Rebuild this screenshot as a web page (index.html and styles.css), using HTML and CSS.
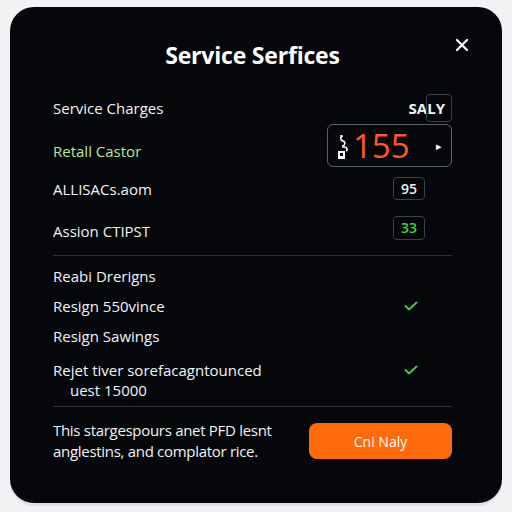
FILE: index.html
```html
<!DOCTYPE html>
<html lang="en">
<head>
    <meta charset="UTF-8">
    <title>Service Serfices</title>
    <link rel="stylesheet" href="styles.css">
</head>
<body>
    <div class="card">
        <div class="header">
            <span></span>
            <h1>Service Serfices</h1>
            <button class="close" aria-label="Close">
                <svg width="14" height="14" viewBox="0 0 14 14"><path d="M2 2L12 12M12 2L2 12" stroke="#fff" stroke-width="2.2" stroke-linecap="round"/></svg>
            </button>
        </div>

        <div class="rows">
            <div class="row r1">
                <span>Service Charges</span>
                <span class="tag">SALY</span>
            </div>
            <div class="row r2">
                <span class="label green">Retall Castor</span>
                <div class="bigbox">
                    <svg class="glyph" width="13" height="26" viewBox="0 0 13 26">
                        <path d="M7 2C4 2 4 6 7 7C10 8 9 12 6 12" stroke="#fff" stroke-width="1.6" fill="none"/>
                        <path d="M5 1V4M7 11V14" stroke="#fff" stroke-width="1.4"/>
                        <path d="M8 13C11 13 12 16 10 17" stroke="#fff" stroke-width="1.6" fill="none"/>
                        <rect x="2" y="17" width="7" height="8" fill="#fff"/>
                        <rect x="4" y="19" width="3" height="3" fill="#05070b"/>
                    </svg>
                    <span class="big">155</span>
                    <span class="tri">&#9656;</span>
                </div>
            </div>
            <div class="row r3">
                <span>ALLISACs.aom</span>
                <span class="num">95</span>
            </div>
            <div class="row r4">
                <span class="label">Assion CTIPST</span>
                <span class="num green2">33</span>
            </div>
        </div>

        <div class="checks">
            <div class="crow"><span>Reabi Drerigns</span></div>
            <div class="crow">
                <span>Resign 550vince</span>
                <svg class="ok" width="14" height="10" viewBox="0 0 14 10"><path d="M1.5 5L5 8.5L12.5 1.5" stroke="#3fd23f" stroke-width="1.8" fill="none" stroke-linecap="round" stroke-linejoin="round"/></svg>
            </div>
            <div class="crow"><span>Resign Sawings</span></div>
            <div class="crow last">
                <span>Rejet tiver sorefacagntounced<br><span class="indent">uest 15000</span></span>
                <svg class="ok" width="14" height="10" viewBox="0 0 14 10"><path d="M1.5 5L5 8.5L12.5 1.5" stroke="#3fd23f" stroke-width="1.8" fill="none" stroke-linecap="round" stroke-linejoin="round"/></svg>
            </div>
        </div>

        <div class="footer">
            <p>This stargespours anet PFD lesnt anglestins, and complator rice.</p>
            <button class="cta">Cni Naly</button>
        </div>
    </div>
</body>
</html>
```

FILE: styles.css
```css
body { margin: 0; background: #f1f2f3; font-family: "Open Sans", sans-serif; color: #f2f3f4; }
.card { margin: 7px 10px 9px; height: 496px; box-sizing: border-box; background: #05070b; border-radius: 24px; padding: 0 50px 0 43px; box-shadow: 0 3px 0 #dfe1e4; }

.header { display: grid; grid-template-columns: 1fr auto 1fr; align-items: center; padding: 34px 0 27px; }
.header h1 { margin: 0; font-size: 23px; line-height: 28px; font-weight: 700; color: #fff; letter-spacing: -0.2px; }
.close { justify-self: end; margin-right: -17px; margin-top: -20px; background: none; border: 0; padding: 0; width: 14px; height: 14px; }

.rows { border-bottom: 1px solid #2e3238; padding-bottom: 15px; }
.row { display: flex; justify-content: space-between; align-items: center; font-size: 15px; }
.r1 { height: 24px; }
.r2 { height: 43px; margin-top: 4px; }
.r3 { height: 23px; margin-top: 10px; }
.r4 { height: 24px; margin-top: 16px; }
.r2 .label { align-self: flex-end; margin-bottom: 6px; }
.r4 .label { padding-top: 6px; }
.green { color: #b9e6a2; }

.tag { position: relative; font-weight: 700; padding: 0 7px 0 0; }
.tag::after { content: ""; position: absolute; left: 17px; right: 0; top: -4px; bottom: -4px; border: 1px solid #3c4048; border-radius: 4px; }

.bigbox { display: flex; align-items: center; width: 125px; height: 43px; box-sizing: border-box; border: 1px solid #5b5f66; border-radius: 6px; padding: 0 9px 0 8px; }
.glyph { margin-top: 2px; }
.big { font-size: 33px; color: #ff5a1c; margin-left: 4px; line-height: 1; }
.tri { margin-left: auto; font-size: 11px; color: #fff; }

.num { width: 32px; height: 23px; box-sizing: border-box; border: 1px solid #3c4048; border-radius: 4px; text-align: center; font-size: 14px; font-weight: 600; line-height: 21px; margin-right: 27px; }
.green2 { color: #3fd23f; height: 24px; }

.checks { border-bottom: 1px solid #2e3238; padding: 10px 0 6px; display: flex; flex-direction: column; gap: 10px; }
.crow { display: flex; justify-content: space-between; align-items: flex-start; font-size: 15px; line-height: 20px; }
.crow.last { margin-top: 4px; }
.indent { padding-left: 17px; }
.ok { margin: 5px 34px 0 0; }

.footer { display: flex; justify-content: space-between; align-items: center; padding-top: 13px; }
.footer p { margin: 0; width: 240px; font-size: 15px; line-height: 21px; letter-spacing: -0.3px; }
.cta { width: 143px; height: 36px; border: 0; border-radius: 8px; background: #ff6b0a; color: #fff; font-family: "Open Sans", sans-serif; font-size: 14px; }
```
